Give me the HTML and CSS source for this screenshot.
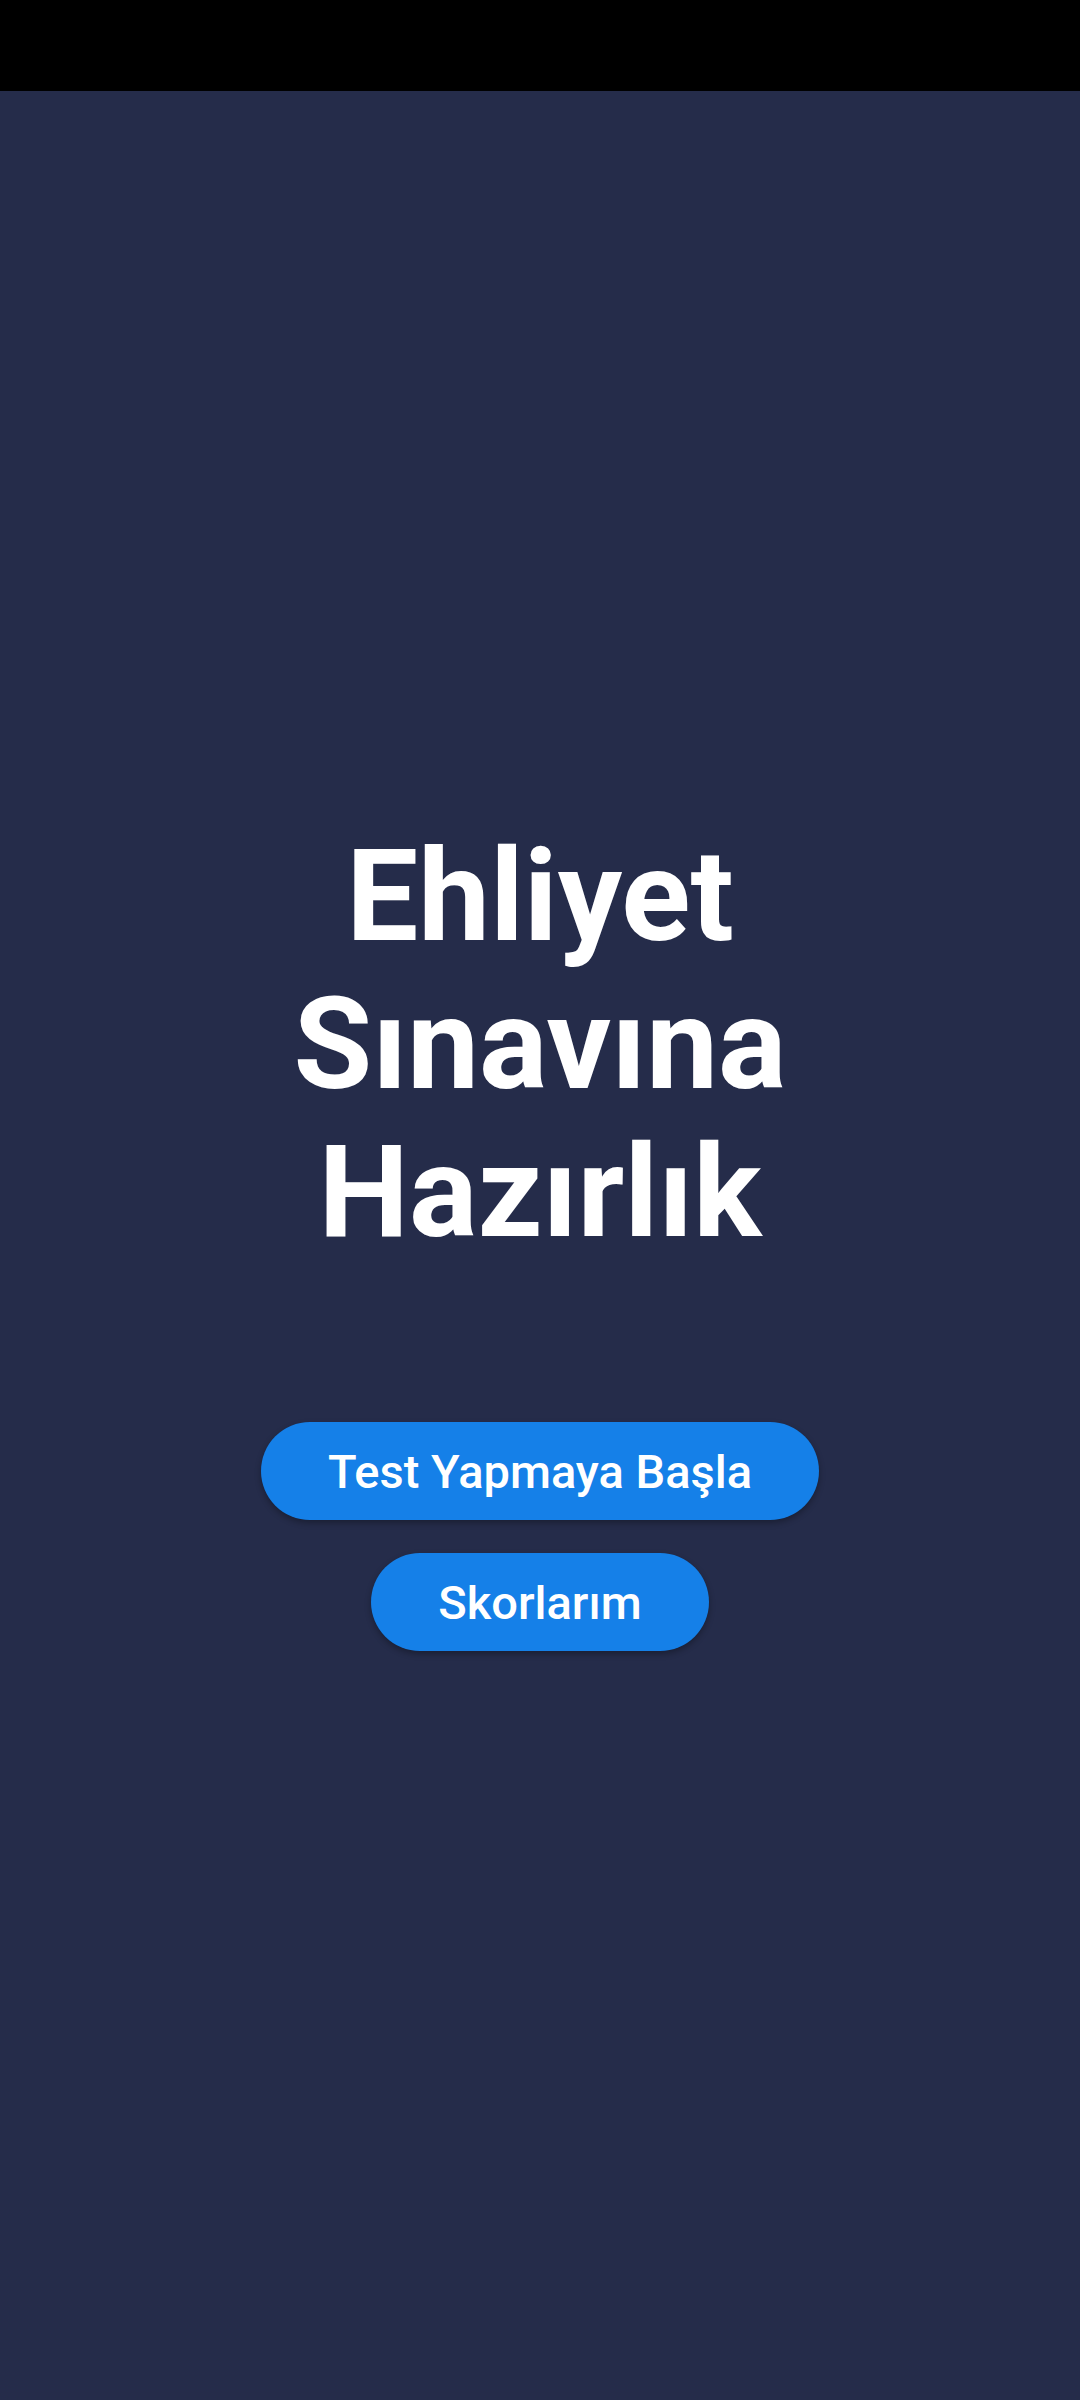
FILE: index.html
```html
<!DOCTYPE html>
<html lang="tr">
<head>
<meta charset="utf-8">
<title>Ehliyet Sınavına Hazırlık</title>
<link rel="stylesheet" href="styles.css">
</head>
<body>
<div class="status-bar"></div>
<main class="screen">
  <h1 class="title">Ehliyet<br>Sınavına<br>Hazırlık</h1>
  <div class="actions">
    <button class="btn btn-wide">Test Yapmaya Başla</button>
    <button class="btn">Skorlarım</button>
  </div>
</main>
</body>
</html>
```

FILE: styles.css
```css
html, body {
  margin: 0;
  padding: 0;
  background: #252c4a;
  font-family: Roboto, "Noto Sans", "Liberation Sans", sans-serif;
}

.status-bar {
  height: 91px;
  background: #000000;
}

.screen {
  height: 2309px;
  display: flex;
  flex-direction: column;
  align-items: center;
  padding-top: 731px;
  box-sizing: border-box;
}

.title {
  margin: 0;
  color: #ffffff;
  font-size: 128px;
  font-weight: 700;
  line-height: 148px;
  text-align: center;
}

.actions {
  margin-top: 156px;
  display: flex;
  flex-direction: column;
  align-items: center;
  gap: 33px;
}

.btn {
  height: 98px;
  padding: 0 67px;
  border: none;
  border-radius: 49px;
  background: #1580e8;
  color: #ffffff;
  font-family: Roboto, "Noto Sans", "Liberation Sans", sans-serif;
  font-size: 47px;
  font-weight: 500;
  display: flex;
  align-items: center;
  justify-content: center;
  box-shadow: 0 3px 6px rgba(0, 0, 0, 0.3);
}
```
